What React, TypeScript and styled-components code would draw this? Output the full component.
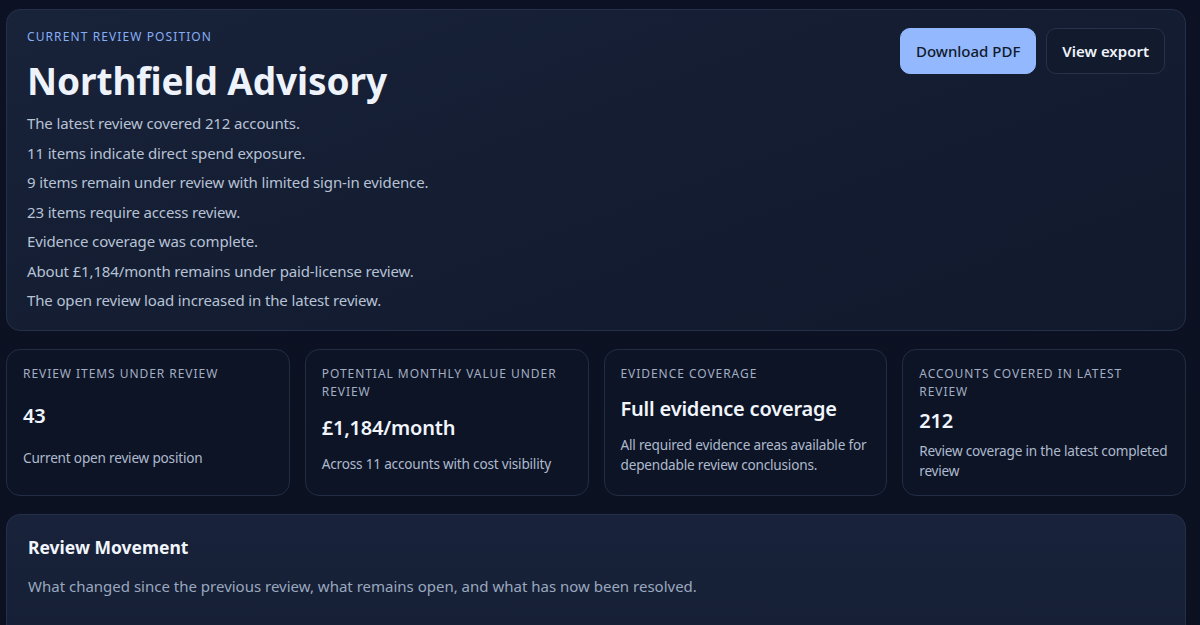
import React from "react";
import styled, { createGlobalStyle } from "styled-components";

const Global = createGlobalStyle`
  html, body { margin: 0; padding: 0; background: #0b1120; }
  body {
    font-family: "Segoe UI", "Noto Sans", "Open Sans", sans-serif;
    color: #e5ecf8;
    -webkit-font-smoothing: antialiased;
  }
  * { box-sizing: border-box; }
`;

const Page = styled.div`
  min-height: 625px;
  background: linear-gradient(180deg, #0c1224 0%, #0b1120 100%);
  padding: 9px 14px 24px 6px;
  display: flex;
  flex-direction: column;
  gap: 18px;
`;

const Hero = styled.section`
  border: 1px solid #243049;
  border-radius: 14px;
  background: linear-gradient(160deg, #182239 0%, #131c30 60%, #111a2d 100%);
  padding: 19px 20px 19px 20px;
  display: flex;
  justify-content: space-between;
  align-items: flex-start;
`;

const HeroMain = styled.div`
  display: flex;
  flex-direction: column;
`;

const Eyebrow = styled.div`
  font-size: 12px;
  line-height: 16px;
  letter-spacing: 1.1px;
  text-transform: uppercase;
  color: #86aef5;
`;

const Title = styled.h1`
  margin: 14px 0 9px;
  font-size: 37px;
  line-height: 44px;
  font-weight: 700;
  letter-spacing: -0.1px;
  color: #edf2fb;
`;

const Lines = styled.div`
  display: flex;
  flex-direction: column;
  gap: 7.5px;
`;

const Line = styled.p`
  margin: 0;
  font-size: 15px;
  line-height: 22px;
  letter-spacing: -0.14px;
  color: #b7c2d5;
`;

const Actions = styled.div`
  display: flex;
  gap: 10px;
  margin-top: -1px;
`;

const Button = styled.button<{ $primary?: boolean }>`
  height: 46px;
  padding: 0 15px;
  border-radius: 10px;
  font-family: inherit;
  font-size: 15px;
  font-weight: ${(p) => (p.$primary ? 500 : 600)};
  cursor: pointer;
  border: 1px solid ${(p) => (p.$primary ? "#93b8fd" : "#27324a")};
  background: ${(p) => (p.$primary ? "#93b8fd" : "#121a2d")};
  color: ${(p) => (p.$primary ? "#111a2c" : "#eef3fb")};
`;

const Stats = styled.div`
  display: grid;
  grid-template-columns: repeat(4, 1fr);
  gap: 15px;
`;

const StatCard = styled.div`
  border: 1px solid #222d44;
  border-radius: 14px;
  background: #0d1426;
  padding: 15px 14px 14px 16px;
  display: grid;
  row-gap: 8px;
`;

const StatLabel = styled.div`
  font-size: 12px;
  line-height: 18px;
  letter-spacing: 0.95px;
  text-transform: uppercase;
  color: #a3aec2;
`;

const StatValue = styled.div`
  font-size: 20px;
  line-height: 24px;
  font-weight: 600;
  letter-spacing: -0.2px;
  color: #f1f5fc;
`;

const StatDesc = styled.div`
  font-size: 13.6px;
  line-height: 20px;
  letter-spacing: -0.2px;
  color: #aebacd;
`;

const Section = styled.section`
  border: 1px solid #243049;
  border-radius: 14px;
  background: linear-gradient(180deg, #18223a 0%, #141d32 100%);
  padding: 21px 21px 24px;
  min-height: 200px;
`;

const SectionTitle = styled.h2`
  margin: 0;
  font-size: 17.5px;
  line-height: 22px;
  font-weight: 700;
  color: #f1f5fc;
`;

const SectionSub = styled.p`
  margin: 17px 0 0;
  font-size: 15px;
  line-height: 22px;
  color: #9aa8be;
`;

const lines = [
  "The latest review covered 212 accounts.",
  "11 items indicate direct spend exposure.",
  "9 items remain under review with limited sign-in evidence.",
  "23 items require access review.",
  "Evidence coverage was complete.",
  "About £1,184/month remains under paid-license review.",
  "The open review load increased in the latest review.",
];

const stats = [
  { label: "Review items under review", value: "43", desc: "Current open review position" },
  { label: "Potential monthly value under review", value: "£1,184/month", desc: "Across 11 accounts with cost visibility" },
  { label: "Evidence coverage", value: "Full evidence coverage", desc: "All required evidence areas available for dependable review conclusions." },
  { label: "Accounts covered in latest review", value: "212", desc: "Review coverage in the latest completed review" },
];

export default function App() {
  return (
    <>
      <Global />
      <Page>
        <Hero>
          <HeroMain>
            <Eyebrow>Current review position</Eyebrow>
            <Title>Northfield Advisory</Title>
            <Lines>
              {lines.map((l) => (
                <Line key={l}>{l}</Line>
              ))}
            </Lines>
          </HeroMain>
          <Actions>
            <Button $primary>Download PDF</Button>
            <Button>View export</Button>
          </Actions>
        </Hero>
        <Stats>
          {stats.map((s) => (
            <StatCard key={s.label}>
              <StatLabel>{s.label}</StatLabel>
              <StatValue>{s.value}</StatValue>
              <StatDesc>{s.desc}</StatDesc>
            </StatCard>
          ))}
        </Stats>
        <Section>
          <SectionTitle>Review Movement</SectionTitle>
          <SectionSub>What changed since the previous review, what remains open, and what has now been resolved.</SectionSub>
        </Section>
      </Page>
    </>
  );
}
